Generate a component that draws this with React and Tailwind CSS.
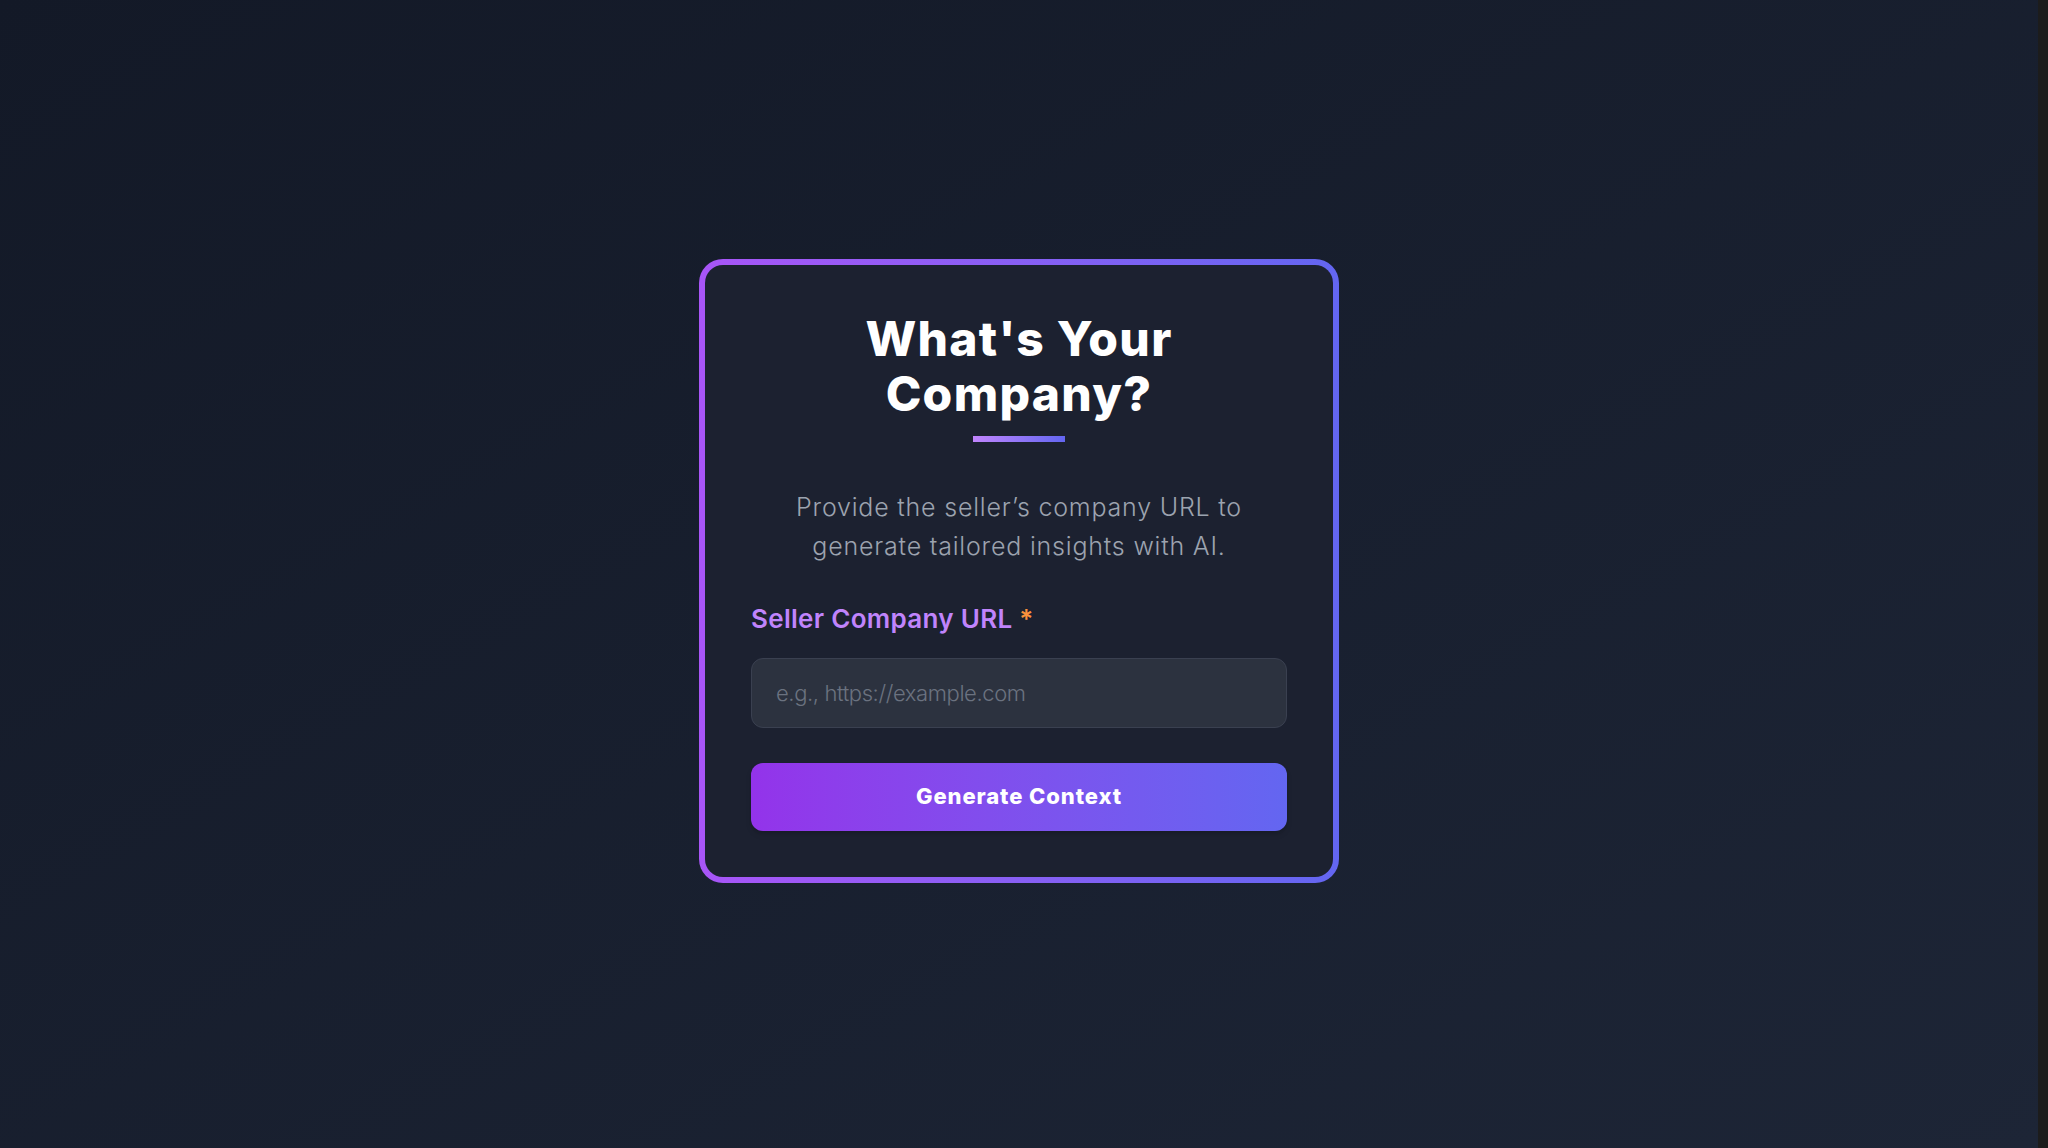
import React, { useState } from 'react';

export default function App() {
  const [url, setUrl] = useState('');

  return (
    <div className="flex h-screen w-full overflow-hidden font-[Inter,sans-serif]">
      {/* Page */}
      <main className="flex-1 flex items-center justify-center bg-linear-to-br from-[#131927] to-[#1d2536]">
        {/* Card with gradient border */}
        <div className="w-[640px] rounded-3xl bg-linear-to-r from-[#a855f7] to-[#6366f1] p-[6px] -mt-[7px]">
          <div className="rounded-[18px] bg-[#1c2130] p-[46px] flex flex-col items-center">
            <h1 className="text-[48px] leading-[55px] font-extrabold text-white text-center tracking-[1.3px]">
              What's Your
              <br />
              Company?
            </h1>
            <div className="mt-[15px] w-[92px] h-1.5 bg-linear-to-r from-[#c084fc] to-[#6366f1]"></div>

            <p className="mt-[46px] text-[25px] leading-[39px] font-light text-[#9ca3af] text-center tracking-[0.8px]">
              Provide the seller’s company URL to
              <br />
              generate tailored insights with AI.
            </p>

            <form className="w-full mt-[37px]" onSubmit={(e) => e.preventDefault()}>
              <label className="block text-[26px] leading-[32px] font-semibold text-[#c084fc] tracking-[0.3px]">
                Seller Company URL <span className="text-[#fb923c]">*</span>
              </label>
              <input
                type="text"
                value={url}
                onChange={(e) => setUrl(e.target.value)}
                placeholder="e.g., https://example.com"
                className="mt-[23px] block w-full h-[70px] rounded-xl border border-[#3a4050] bg-[#2c323f] px-6 text-[22px] tracking-[-0.4px] font-light text-white placeholder-[#6b7280] outline-none"
              />
              <button
                type="submit"
                className="mt-[35px] w-full h-[68px] rounded-xl bg-linear-to-r from-[#9333ea] to-[#6366f1] text-white text-[22px] tracking-[0.9px] font-extrabold shadow-md shadow-black/15"
              >
                Generate Context
              </button>
            </form>
          </div>
        </div>
      </main>

      {/* Scrollbar track */}
      <div className="w-[10px] bg-[#1c1c1c]"></div>
    </div>
  );
}
